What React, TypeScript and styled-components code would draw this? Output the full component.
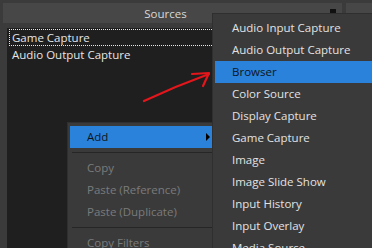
import React from "react";
import styled, { createGlobalStyle } from "styled-components";

const Global = createGlobalStyle`
  html, body { margin: 0; padding: 0; }
  body {
    width: 372px; height: 248px; overflow: hidden;
    background: #3a3a3a;
    font-family: "Open Sans", "Noto Sans", "DejaVu Sans", sans-serif;
    font-size: 11.5px;
  }
`;

const Screen = styled.div`
  position: relative;
  width: 372px;
  height: 248px;
  overflow: hidden;
  background: #3b3b3b;
  display: flex;
  flex-direction: column;
`;

const HeaderRow = styled.div`
  display: flex;
  gap: 4px;
  padding: 3px 0 0 3px;
  height: 20px;
`;

const DockTitle = styled.div<{ $w: number }>`
  flex: 0 0 ${(p) => p.$w}px;
  background: #474747;
  color: #d8d8d8;
  display: flex;
  align-items: center;
  justify-content: center;
  padding-right: 14px;
  box-sizing: border-box;
  font-size: 11.5px;
  position: relative;
`;

const FloatIcon = styled.div`
  position: absolute;
  right: 6px;
  top: 6px;
  width: 6px;
  height: 4px;
  background: #111;
`;

const DockBody = styled.div`
  flex: 1;
  padding: 5px 0 0 7px;
  display: flex;
`;

const List = styled.div`
  width: 331px;
  background: #1f1f1f;
  padding-top: 1px;
  display: flex;
  flex-direction: column;
`;

const ListItem = styled.div<{ $focus?: boolean }>`
  height: 17px;
  line-height: 16px;
  padding-left: 2px;
  margin: 0 2px;
  color: #e6e6e6;
  box-sizing: border-box;
  border: 1px dotted ${(p) => (p.$focus ? "#e8e8e8" : "transparent")};
  white-space: nowrap;
`;

const Menu = styled.div<{ $left: number; $top: number; $w: number }>`
  position: absolute;
  left: ${(p) => p.$left}px;
  top: ${(p) => p.$top}px;
  width: ${(p) => p.$w}px;
  background: #3a3a3a;
  border: 1px solid #2f2f2f;
  padding: 3px 2px;
  box-sizing: border-box;
  display: flex;
  flex-direction: column;
`;

const Item = styled.div<{ $active?: boolean; $disabled?: boolean }>`
  height: 22px;
  line-height: 22px;
  padding-left: 17px;
  position: relative;
  white-space: nowrap;
  background: ${(p) => (p.$active ? "#2a82da" : "transparent")};
  color: ${(p) => (p.$active ? "#0e1520" : p.$disabled ? "#7b7b7b" : "#e2e2e2")};
`;

const SubArrow = styled.span`
  position: absolute;
  right: 6px;
  top: 7px;
  width: 0;
  height: 0;
  border-top: 4px solid transparent;
  border-bottom: 4px solid transparent;
  border-left: 4px solid #000;
`;

const Separator = styled.div`
  height: 1px;
  background: #262626;
  margin: 4px 0 4px 2px;
`;

const Annotation = styled.svg`
  position: absolute;
  left: 0;
  top: 0;
  pointer-events: none;
`;

const subItems = [
  "Audio Input Capture",
  "Audio Output Capture",
  "Browser",
  "Color Source",
  "Display Capture",
  "Game Capture",
  "Image",
  "Image Slide Show",
  "Input History",
  "Input Overlay",
  "Media Source",
];

export default function App() {
  return (
    <Screen>
      <Global />
      <HeaderRow>
        <DockTitle $w={339}>
          Sources
          <FloatIcon />
        </DockTitle>
        <DockTitle $w={40} />
      </HeaderRow>
      <DockBody>
        <List>
          <ListItem $focus>Game Capture</ListItem>
          <ListItem>Audio Output Capture</ListItem>
        </List>
      </DockBody>

      <Menu $left={67} $top={122} $w={152}>
        <Item $active>
          Add
          <SubArrow />
        </Item>
        <Separator />
        <Item $disabled>Copy</Item>
        <Item $disabled>Paste (Reference)</Item>
        <Item $disabled>Paste (Duplicate)</Item>
        <Separator />
        <Item $disabled>Copy Filters</Item>
      </Menu>

      <Menu $left={212} $top={13} $w={170}>
        {subItems.map((s) => (
          <Item key={s} $active={s === "Browser"}>
            {s}
          </Item>
        ))}
      </Menu>

      <Annotation width="372" height="248" viewBox="0 0 372 248">
        <path
          d="M144 101 Q 176 86 209 74"
          fill="none"
          stroke="#e3161b"
          strokeWidth="2.2"
          strokeLinecap="round"
        />
        <path
          d="M192 74 L209 73 L203 86"
          fill="none"
          stroke="#e3161b"
          strokeWidth="2.2"
          strokeLinecap="round"
          strokeLinejoin="round"
        />
      </Annotation>
    </Screen>
  );
}
